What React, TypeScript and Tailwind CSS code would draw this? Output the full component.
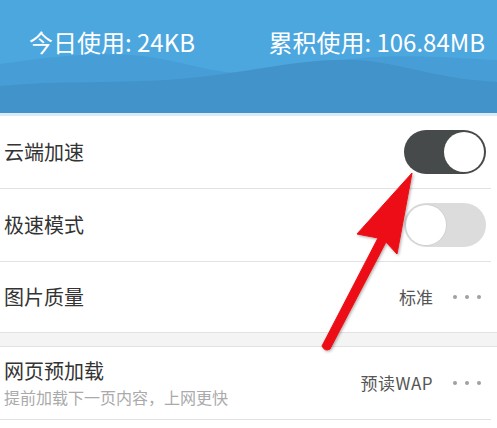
const font = { fontFamily: '"Noto Sans CJK SC", "Noto Sans", sans-serif' };

function Toggle({ on }: { on: boolean }) {
  return (
    <div
      className={`flex h-[44px] w-[82px] items-center rounded-full p-[2px] ${
        on ? "justify-end bg-[#474a4a]" : "justify-start bg-[#dcdcdc]"
      }`}
    >
      <div
        className={`h-[40px] w-[40px] rounded-full bg-white ${on ? "" : "shadow-[0_0_0_1px_#d2d2d2]"}`}
      />
    </div>
  );
}

function Dots() {
  return (
    <div className="flex items-center gap-[8px]">
      <span className="h-[4px] w-[4px] rounded-full bg-[#a0a0a0]" />
      <span className="h-[4px] w-[4px] rounded-full bg-[#a0a0a0]" />
      <span className="h-[4px] w-[4px] rounded-full bg-[#a0a0a0]" />
    </div>
  );
}

function Divider() {
  return <div className="mr-[6px] h-px bg-[#e2e2e2]" />;
}

export default function App() {
  return (
    <div className="relative h-[428px] w-[497px] overflow-hidden bg-white" style={font}>
      {/* header */}
      <div className="relative h-[116px] bg-[#4ca7df]">
        <svg className="absolute inset-0" width="497" height="116" viewBox="0 0 497 116">
          <path
            d="M0,64 C40,58 90,52 130,55 C180,58 210,76 260,73 C300,70 320,62 360,58 C410,54 450,58 497,60 L497,116 L0,116 Z"
            fill="#479ed7"
          />
          <path
            d="M0,86 C60,80 120,84 180,79 C250,73 300,58 355,60 C400,62 430,78 497,82 L497,116 L0,116 Z"
            fill="#4293ca"
          />
          <rect x="0" y="113" width="497" height="3" fill="#d9ebf6" />
        </svg>
        <div className="relative flex items-center justify-between pl-[29px] pr-[12px] pt-[26px] text-[24px] leading-[32px] text-white">
          <span>今日使用: 24KB</span>
          <span>累积使用: 106.84MB</span>
        </div>
      </div>

      <div className="flex h-[72px] items-center justify-between pl-[4px] pr-[11px]">
        <span className="text-[20px] text-[#333]">云端加速</span>
        <Toggle on />
      </div>
      <Divider />
      <div className="flex h-[72px] items-center justify-between pl-[4px] pr-[11px]">
        <span className="text-[20px] text-[#333]">极速模式</span>
        <Toggle on={false} />
      </div>
      <Divider />
      <div className="flex h-[70px] items-center justify-between pl-[4px] pr-[16px]">
        <span className="text-[20px] text-[#333]">图片质量</span>
        <div className="flex items-center gap-[20px]">
          <span className="text-[17px] text-[#555]">标准</span>
          <Dots />
        </div>
      </div>
      <div className="h-[15px] border-y border-[#e2e2e2] bg-[#f4f4f4]" />
      <div className="flex h-[72px] items-center justify-between pl-[4px] pr-[16px]">
        <div className="flex flex-col">
          <span className="text-[20px] leading-[28px] text-[#333]">网页预加载</span>
          <span className="text-[16px] leading-[24px] text-[#aaa]">提前加载下一页内容，上网更快</span>
        </div>
        <div className="flex items-center gap-[20px]">
          <span className="text-[17px] tracking-[0.5px] text-[#555]">预读WAP</span>
          <Dots />
        </div>
      </div>
      <Divider />

      {/* red annotation arrow */}
      <svg className="absolute left-0 top-0" width="497" height="428" viewBox="0 0 497 428">
        <defs>
          <filter id="sh" x="-20%" y="-20%" width="140%" height="140%">
            <feDropShadow dx="1" dy="1" stdDeviation="1.5" floodColor="#000" floodOpacity="0.35" />
          </filter>
        </defs>
        <path
          d="M412,173 L397,254 L386,242 L330,349 Q325,352 322,346 L378,238 L357,234 Z"
          fill="#ec1014"
          stroke="#ec1014"
          strokeWidth="1"
          strokeLinejoin="round"
          filter="url(#sh)"
        />
      </svg>
    </div>
  );
}
